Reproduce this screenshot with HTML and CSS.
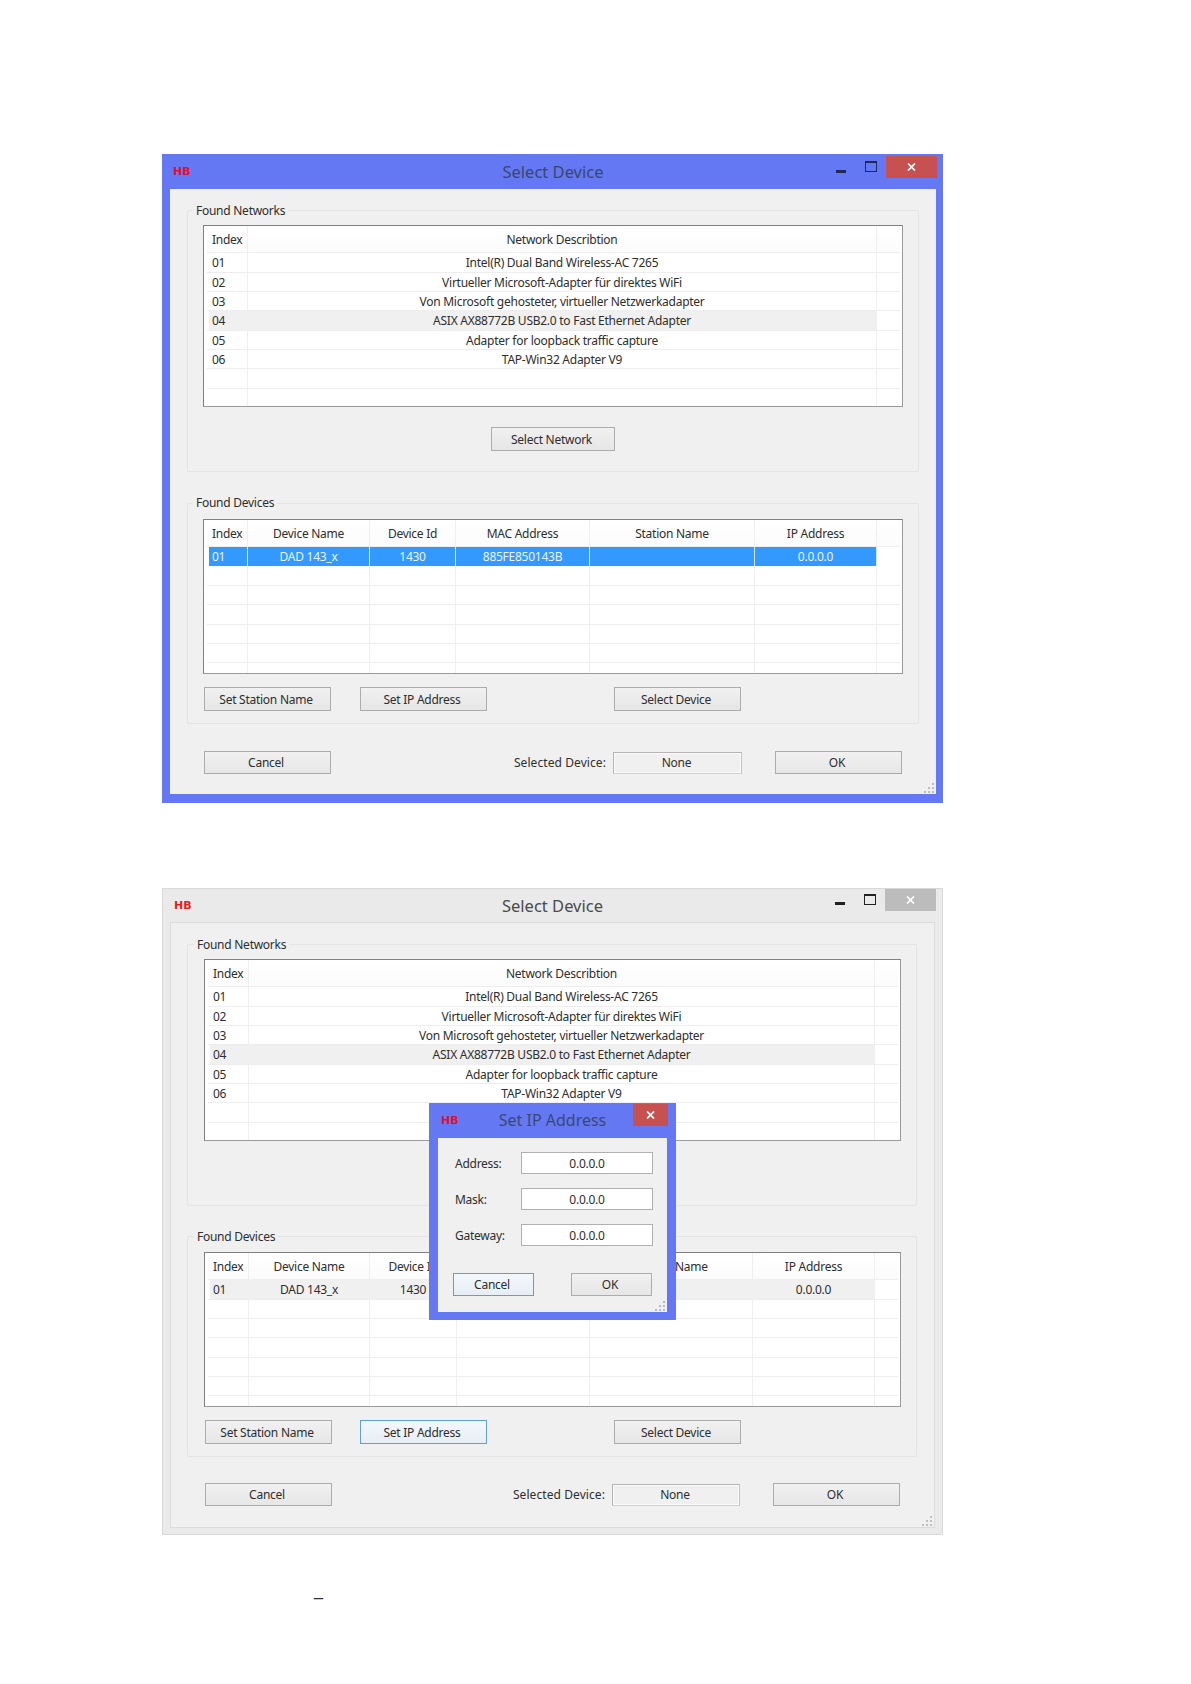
FILE: index.html
```html
<!DOCTYPE html>
<html lang="de">
<head>
<meta charset="utf-8">
<title>Select Device</title>
<link rel="stylesheet" href="styles.css">
</head>
<body>
<main class="page">

<section class="win win-active win-one">
  <header class="bar">
    <span class="logo">HB</span>
    <h1 class="title">Select Device</h1>
    <div class="ctrls">
      <svg class="ico-min" width="10" height="3" viewBox="0 0 10 3"><rect width="10" height="3" fill="#1c2a5c"/></svg>
      <svg class="ico-max" width="12" height="11" viewBox="0 0 12 11"><rect x="0.5" y="1" width="11" height="9.5" fill="none" stroke="#1c2a5c"/><rect width="12" height="2" fill="#1c2a5c"/></svg>
      <div class="close"><svg width="9" height="8" viewBox="0 0 9 8"><path d="M1 .5l7 7M8 .5l-7 7" stroke="#fff" stroke-width="1.7"/></svg></div>
    </div>
  </header>
  <div class="client">
    <div class="group">
      <div class="legend">Found Networks</div>
      <div class="list">
        <div class="row net head"><div class="c first">Index</div><div class="c">Network Describtion</div><div class="c"></div></div>
        <div class="row net"><div class="c first">01</div><div class="c">Intel(R) Dual Band Wireless-AC 7265</div><div class="c"></div></div>
        <div class="row net"><div class="c first">02</div><div class="c">Virtueller Microsoft-Adapter für direktes WiFi</div><div class="c"></div></div>
        <div class="row net"><div class="c first">03</div><div class="c">Von Microsoft gehosteter, virtueller Netzwerkadapter</div><div class="c"></div></div>
        <div class="row net grey"><div class="c first">04</div><div class="c">ASIX AX88772B USB2.0 to Fast Ethernet Adapter</div><div class="c"></div></div>
        <div class="row net"><div class="c first">05</div><div class="c">Adapter for loopback traffic capture</div><div class="c"></div></div>
        <div class="row net"><div class="c first">06</div><div class="c">TAP-Win32 Adapter V9</div><div class="c"></div></div>
        <div class="row net"><div class="c first"></div><div class="c"></div><div class="c"></div></div>
        <div class="row net"><div class="c first"></div><div class="c"></div><div class="c"></div></div>
      </div>
      <div class="center"><button class="btn btn-net">Select Network</button></div>
    </div>
    <div class="group group-dev">
      <div class="legend">Found Devices</div>
      <div class="list list-dev">
        <div class="row dev head"><div class="c first">Index</div><div class="c">Device Name</div><div class="c">Device Id</div><div class="c">MAC Address</div><div class="c">Station Name</div><div class="c">IP Address</div><div class="c"></div></div>
        <div class="row dev sel"><div class="c first">01</div><div class="c">DAD 143_x</div><div class="c">1430</div><div class="c">885FE850143B</div><div class="c"></div><div class="c">0.0.0.0</div><div class="c"></div></div>
        <div class="row dev"><div class="c first"></div><div class="c"></div><div class="c"></div><div class="c"></div><div class="c"></div><div class="c"></div><div class="c"></div></div>
        <div class="row dev"><div class="c first"></div><div class="c"></div><div class="c"></div><div class="c"></div><div class="c"></div><div class="c"></div><div class="c"></div></div>
        <div class="row dev"><div class="c first"></div><div class="c"></div><div class="c"></div><div class="c"></div><div class="c"></div><div class="c"></div><div class="c"></div></div>
        <div class="row dev"><div class="c first"></div><div class="c"></div><div class="c"></div><div class="c"></div><div class="c"></div><div class="c"></div><div class="c"></div></div>
        <div class="row dev"><div class="c first"></div><div class="c"></div><div class="c"></div><div class="c"></div><div class="c"></div><div class="c"></div><div class="c"></div></div>
        <div class="row dev"><div class="c first"></div><div class="c"></div><div class="c"></div><div class="c"></div><div class="c"></div><div class="c"></div><div class="c"></div></div>
      </div>
      <div class="btn-row">
        <button class="btn">Set Station Name</button>
        <button class="btn">Set IP Address</button>
        <button class="btn btn-far">Select Device</button>
      </div>
    </div>
    <div class="foot">
      <button class="btn">Cancel</button>
      <span class="foot-label">Selected Device:</span>
      <output class="none-box">None</output>
      <button class="btn btn-ok">OK</button>
    </div>
    <svg class="grip" width="11" height="11" viewBox="0 0 11 11"><path d="M8 0h2v2H8zM4 4h2v2H4zM8 4h2v2H8zM0 8h2v2H0zM4 8h2v2H4zM8 8h2v2H8z" fill="#b9bcc4"/></svg>
  </div>
</section>

<section class="win win-idle win-two">
  <header class="bar">
    <span class="logo">HB</span>
    <h1 class="title">Select Device</h1>
    <div class="ctrls">
      <svg class="ico-min" width="10" height="3" viewBox="0 0 10 3"><rect width="10" height="3" fill="#222"/></svg>
      <svg class="ico-max" width="12" height="11" viewBox="0 0 12 11"><rect x="0.5" y="1" width="11" height="9.5" fill="none" stroke="#222"/><rect width="12" height="2" fill="#222"/></svg>
      <div class="close"><svg width="9" height="8" viewBox="0 0 9 8"><path d="M1 .5l7 7M8 .5l-7 7" stroke="#fff" stroke-width="1.7"/></svg></div>
    </div>
  </header>
  <div class="client">
    <div class="group">
      <div class="legend">Found Networks</div>
      <div class="list">
        <div class="row net head"><div class="c first">Index</div><div class="c">Network Describtion</div><div class="c"></div></div>
        <div class="row net"><div class="c first">01</div><div class="c">Intel(R) Dual Band Wireless-AC 7265</div><div class="c"></div></div>
        <div class="row net"><div class="c first">02</div><div class="c">Virtueller Microsoft-Adapter für direktes WiFi</div><div class="c"></div></div>
        <div class="row net"><div class="c first">03</div><div class="c">Von Microsoft gehosteter, virtueller Netzwerkadapter</div><div class="c"></div></div>
        <div class="row net grey"><div class="c first">04</div><div class="c">ASIX AX88772B USB2.0 to Fast Ethernet Adapter</div><div class="c"></div></div>
        <div class="row net"><div class="c first">05</div><div class="c">Adapter for loopback traffic capture</div><div class="c"></div></div>
        <div class="row net"><div class="c first">06</div><div class="c">TAP-Win32 Adapter V9</div><div class="c"></div></div>
        <div class="row net"><div class="c first"></div><div class="c"></div><div class="c"></div></div>
        <div class="row net"><div class="c first"></div><div class="c"></div><div class="c"></div></div>
      </div>
      <div class="center"><button class="btn btn-net">Select Network</button></div>
    </div>
    <div class="group group-dev">
      <div class="legend">Found Devices</div>
      <div class="list list-dev">
        <div class="row dev head"><div class="c first">Index</div><div class="c">Device Name</div><div class="c">Device Id</div><div class="c">MAC Address</div><div class="c">Station Name</div><div class="c">IP Address</div><div class="c"></div></div>
        <div class="row dev grey"><div class="c first">01</div><div class="c">DAD 143_x</div><div class="c">1430</div><div class="c">885FE850143B</div><div class="c"></div><div class="c">0.0.0.0</div><div class="c"></div></div>
        <div class="row dev"><div class="c first"></div><div class="c"></div><div class="c"></div><div class="c"></div><div class="c"></div><div class="c"></div><div class="c"></div></div>
        <div class="row dev"><div class="c first"></div><div class="c"></div><div class="c"></div><div class="c"></div><div class="c"></div><div class="c"></div><div class="c"></div></div>
        <div class="row dev"><div class="c first"></div><div class="c"></div><div class="c"></div><div class="c"></div><div class="c"></div><div class="c"></div><div class="c"></div></div>
        <div class="row dev"><div class="c first"></div><div class="c"></div><div class="c"></div><div class="c"></div><div class="c"></div><div class="c"></div><div class="c"></div></div>
        <div class="row dev"><div class="c first"></div><div class="c"></div><div class="c"></div><div class="c"></div><div class="c"></div><div class="c"></div><div class="c"></div></div>
        <div class="row dev"><div class="c first"></div><div class="c"></div><div class="c"></div><div class="c"></div><div class="c"></div><div class="c"></div><div class="c"></div></div>
      </div>
      <div class="btn-row">
        <button class="btn">Set Station Name</button>
        <button class="btn btn-focus">Set IP Address</button>
        <button class="btn btn-far">Select Device</button>
      </div>
    </div>
    <div class="foot">
      <button class="btn">Cancel</button>
      <span class="foot-label">Selected Device:</span>
      <output class="none-box">None</output>
      <button class="btn btn-ok">OK</button>
    </div>
    <svg class="grip" width="11" height="11" viewBox="0 0 11 11"><path d="M8 0h2v2H8zM4 4h2v2H4zM8 4h2v2H8zM0 8h2v2H0zM4 8h2v2H4zM8 8h2v2H8z" fill="#c0c0c0"/></svg>
  </div>

  <div class="dialog win-active">
    <header class="bar">
      <span class="logo">HB</span>
      <h2 class="title">Set IP Address</h2>
      <div class="ctrls">
        <div class="close"><svg width="9" height="8" viewBox="0 0 9 8"><path d="M1 .5l7 7M8 .5l-7 7" stroke="#fff" stroke-width="1.7"/></svg></div>
      </div>
    </header>
    <div class="client dialog-client">
      <div class="fields">
        <label class="field-label">Address:</label><output class="field">0.0.0.0</output>
        <label class="field-label">Mask:</label><output class="field">0.0.0.0</output>
        <label class="field-label">Gateway:</label><output class="field">0.0.0.0</output>
      </div>
      <div class="dialog-btns">
        <button class="btn btn-small btn-focus">Cancel</button>
        <button class="btn btn-small">OK</button>
      </div>
      <svg class="grip" width="11" height="11" viewBox="0 0 11 11"><path d="M8 0h2v2H8zM4 4h2v2H4zM8 4h2v2H8zM0 8h2v2H0zM4 8h2v2H4zM8 8h2v2H8z" fill="#b9bcc4"/></svg>
    </div>
  </div>
</section>

<p class="note">_</p>
</main>
</body>
</html>
```
FILE: styles.css
```css
* { box-sizing: border-box; }
html, body { margin: 0; padding: 0; background: #fff; }
body {
  font-family: "Noto Sans", "Open Sans", sans-serif;
  font-size: 12px;
  letter-spacing: -0.26px;
  color: #2e2e2e;
}
.page { padding: 154px 0 0 162px; }

/* windows */
.win { position: relative; width: 781px; }
.win-active { background: #6478f4; }
.win-idle { background: #eaeaea; box-shadow: inset 0 0 0 1px #d8d8d8; }
.win-one { padding: 0 7px 9px 8px; }
.win-two { margin-top: 85px; padding: 0 9px 8px 9px; }

.bar {
  height: 35px;
  display: grid;
  grid-template-columns: 1fr auto 1fr;
  align-items: center;
  position: relative;
}
.logo {
  font-family: "DejaVu Sans", sans-serif;
  font-weight: 700;
  font-size: 11px;
  letter-spacing: 0;
  color: #e2102c;
  padding-left: 3px;
}
.win-idle > .bar .logo { color: #ee1820; }
.title {
  margin: 0;
  font-size: 16.5px;
  letter-spacing: 0;
  font-weight: 400;
  color: #38476e;
}
.win-idle > .bar .title { color: #4b4b4b; }
.ctrls {
  justify-self: end;
  align-self: start;
  display: flex;
  align-items: flex-start;
  margin-right: -1px;
  padding-top: 2px;
}
.ico-min { margin-top: 14px; }
.ico-max { margin: 5px 9px 0 19px; }
.close {
  width: 51px;
  height: 22px;
  background: #c75050;
  display: flex;
  align-items: center;
  justify-content: center;
}
.win-idle > .bar .close { background: #bcbcbc; }
.win-two > .bar .ctrls { padding-top: 1px; margin-right: -2px; }
.win-two > .bar .ico-min { margin-top: 13px; }

.client {
  position: relative;
  background: #f0f0f0;
  padding: 21px 34px 20px;
}
.win-two > .client { padding-bottom: 21px; box-shadow: 0 0 0 1px #dcdcdc; }
.grip { position: absolute; right: 1px; bottom: 0; }

/* group boxes */
.group {
  margin: 0 -17px;
  border: 1px solid #e4e4e4;
  border-radius: 2px;
  padding: 0 15px 20px;
}
.win-two > .client .group { padding-left: 16px; margin-right: -17px; margin-left: -18px; width: 730px; }
.legend {
  width: fit-content;
  margin: -8px 0 6px -10px;
  padding: 0 3px;
  height: 16px;
  line-height: 16px;
  background: #f0f0f0;
}
.group-dev { margin-top: 31px; padding-bottom: 12px; }
.group-dev .legend { margin-bottom: 7px; }
.win-one .group-dev .legend { margin-top: -9px; margin-bottom: 8px; }
.win-two > .client .group-dev { margin-top: 30px; padding-bottom: 12px; }

/* lists */
.list {
  height: 182px;
  background: #fff;
  border: 1px solid #9a9a9a;
  border-top-color: #808080;
  border-left-color: #808080;
  padding-left: 3px;
  padding-right: 2px;
  overflow: hidden;
}
.list-dev { height: 155px; }
.row {
  display: grid;
  grid-template-rows: minmax(0, 1fr);
  height: 19.33px;
  line-height: 20px;
  border-bottom: 1px solid #eeeeee;
}
.net { grid-template-columns: 41px 629px 1fr; }
.dev { grid-template-columns: 41px 122px 86px 134px 165px 122px 1fr; }
.win-two .net { grid-template-columns: 41px 626px 1fr; }
.win-two .dev { grid-template-columns: 41px 121px 87px 133px 163px 122px 1fr; }
.head { height: 27.3px; line-height: 28px; background: linear-gradient(#fff, #fbfbfb); }
.c {
  text-align: center;
  border-right: 1px solid #efefef;
  white-space: nowrap;
}
.c:last-child { border-right: 0; }
.first { text-align: left; padding-left: 5px; }
.grey .c:not(:last-child) { background: #f0f0f0; border-right-color: #f0f0f0; }
.grey .first { margin-left: 2px; padding-left: 3px; }
.sel { border-bottom-color: #fff; }
.sel .c:not(:last-child) { background: #3399ff; color: #e9f3ff; border-right-color: #d5e8fb; }
.sel .first { margin-left: 2px; padding-left: 3px; }

/* buttons */
.btn {
  display: block;
  width: 127px;
  height: 24px;
  padding: 0 3px 0 0;
  font: inherit;
  letter-spacing: inherit;
  color: inherit;
  background: linear-gradient(#f1f1f1, #e6e6e6);
  border: 1px solid #acacac;
}
.btn-net { width: 124px; margin-top: 20px; }
.center { display: flex; justify-content: center; }
.btn-row { display: flex; gap: 29px; margin: 13px 0 0 1px; }
.btn-far { margin-left: 98px; }
.win-two .btn-row { gap: 28px; }
.win-two .btn-far { margin-left: 99px; }
.btn-focus { background: linear-gradient(#f3f8fd, #e6edf5); border-color: #5c9fe0; }

/* footer */
.foot { display: flex; align-items: center; margin-top: 27px; height: 23px; }
.win-two .foot { margin-top: 26px; }
.foot .btn { height: 23px; }
.foot-label { margin-left: auto; letter-spacing: 0.08px; }
.none-box {
  width: 129px;
  height: 22px;
  line-height: 20px;
  margin-left: 7px;
  padding-right: 2px;
  text-align: center;
  background: #f0f0f0;
  border: 1px solid #b4b4b4;
  border-bottom-color: #d0d0d0;
  border-right-color: #c4c4c4;
  box-shadow: inset 0 0 0 1px #fbfbfb;
}
.foot .btn-ok { margin-left: 33px; }
.win-two .none-box { width: 128px; }

/* dialog */
.dialog {
  position: absolute;
  left: 267px;
  top: 215px;
  width: 247px;
  padding: 0 9px 8px;
}
.dialog .close { width: 35px; margin-right: -1px; }
.dialog .ctrls { padding-top: 1px; margin-right: 0; }
.dialog .title { color: #3a4870; font-size: 16px; padding-bottom: 2px; }
.dialog .logo { padding-left: 3px; }
.dialog-client { padding: 14px 15px 16px 17px; }
.fields {
  display: grid;
  grid-template-columns: 66px 132px;
  row-gap: 14px;
  align-items: center;
}
.field {
  height: 22px;
  line-height: 21px;
  background: #fff;
  border: 1px solid #b0b0b0;
  text-align: center;
}
.dialog-btns { display: flex; justify-content: space-between; margin: 27px 0 0 -2px; }
.btn-small { width: 81px; height: 23px; }

.note {
  margin: 47px 0 0 152px;
  font-family: "Liberation Sans", sans-serif;
  font-size: 16px;
  line-height: 18px;
}
```
